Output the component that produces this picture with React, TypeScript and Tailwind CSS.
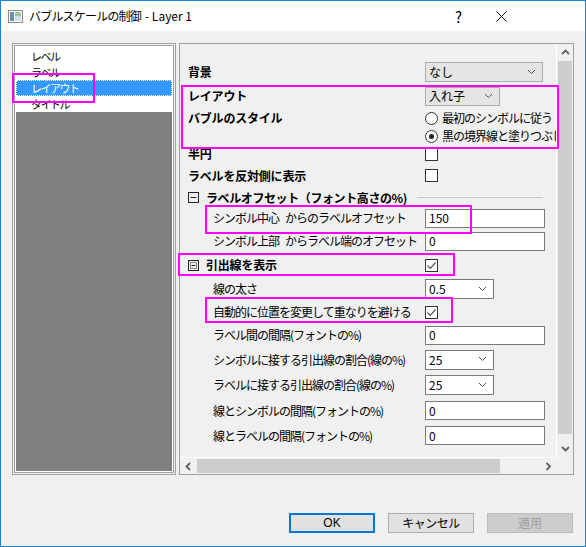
import React from 'react';
import clsx from 'clsx';

type Dir = 'up' | 'down' | 'left' | 'right';

const CHEVRONS: Record<Dir, string> = {
    down: 'M1 2l3.5 3.5L8 2',
    up: 'M1 6l3.5-3.5L8 6',
    left: 'M6 1L2.5 4.5 6 8',
    right: 'M2.5 1L6 4.5 2.5 8',
};

const Chevron: React.FC<{ dir?: Dir; bold?: boolean; className?: string }> = ({ dir = 'down', bold, className }) => (
    <svg width="9" height="9" viewBox="0 0 9 9" className={className}>
        <path d={CHEVRONS[dir]} fill="none" stroke={bold ? '#606060' : '#505050'} strokeWidth={bold ? 1.8 : 1} />
    </svg>
);

const Select: React.FC<{ value: string; editable?: boolean; className?: string }> = ({ value, editable, className }) => (
    <div
        className={clsx(
            'flex items-center justify-between border pl-[3px] pr-[6px]',
            editable ? 'bg-white border-[#7a7a7a]' : 'bg-[#e5e5e5] border-[#adadad]',
            className
        )}
    >
        <span className="leading-none">{value}</span>
        <Chevron />
    </div>
);

const Input: React.FC<{ value: string }> = ({ value }) => (
    <div className="flex items-center w-[120px] h-[19px] bg-white border border-[#7a7a7a] px-[3px]">
        <span className="leading-none">{value}</span>
    </div>
);

const Checkbox: React.FC<{ checked?: boolean }> = ({ checked }) => (
    <div className="w-[13px] h-[13px] border border-[#333] bg-white flex items-center justify-center">
        {checked && (
            <svg width="11" height="11" viewBox="0 0 11 11">
                <path d="M1.5 5.5l2.8 2.8L9.5 2.5" fill="none" stroke="#555" strokeWidth="1.2" />
            </svg>
        )}
    </div>
);

const Radio: React.FC<{ checked?: boolean }> = ({ checked }) => (
    <div className="w-[13px] h-[13px] rounded-full border border-[#333] bg-white flex items-center justify-center shrink-0">
        {checked && <div className="w-[5px] h-[5px] rounded-full bg-[#222]" />}
    </div>
);

const TreeBox: React.FC<{ open?: boolean }> = ({ open }) => (
    <svg width="11" height="11" viewBox="0 0 11 11" className="mr-[7px] shrink-0">
        <rect x="0.5" y="0.5" width="10" height="10" fill="none" stroke="#222" />
        {open ? (
            <path d="M2.5 5.5h6" stroke="#222" />
        ) : (
            <>
                <rect x="2.5" y="2.5" width="6" height="6" fill="none" stroke="#222" strokeDasharray="1 1" />
                <path d="M3.5 5.5h4" stroke="#222" />
            </>
        )}
    </svg>
);

interface RowProps {
    h: string;
    label?: React.ReactNode;
    bold?: boolean;
    indent?: boolean;
    children?: React.ReactNode;
}

const Row: React.FC<RowProps> = ({ h, label, bold, indent, children }) => (
    <div className={clsx('flex items-center shrink-0', h)}>
        <div
            className={clsx(
                'w-[237px] shrink-0 whitespace-nowrap',
                bold ? 'font-bold tracking-[-0.2px]' : 'tracking-[-1px]',
                indent && 'pl-[25px]'
            )}
        >
            {label}
        </div>
        {children}
    </div>
);

// label with the wide gap that the dialog shows between the two words
const Split: React.FC<{ a: string; b: string }> = ({ a, b }) => (
    <>
        {a}
        <span className="inline-block w-[6px]" />
        {b}
    </>
);

const LIST_ITEMS = ['レベル', 'ラベル', 'レイアウト', 'タイトル'];

const Highlight: React.FC<{ className: string }> = ({ className }) => (
    <div className={clsx('absolute border-2 border-[#ff00ff] pointer-events-none', className)} />
);

export default function App() {
    return (
        <div className="relative w-[586px] h-[547px] border border-[#1883d7] bg-[#f0f0f0] flex flex-col text-[12px] text-black font-['Noto_Sans_CJK_JP','Noto_Sans',sans-serif] overflow-hidden">
            {/* title bar */}
            <div className="h-[30px] bg-white flex items-center shrink-0">
                <svg width="15" height="13" viewBox="0 0 15 13" className="ml-[7px] mr-[6px]">
                    <rect x="0.5" y="0.5" width="14" height="12" fill="#fff" stroke="#8a8a8a" />
                    <rect x="2" y="2" width="4" height="9" fill="#6a8fb0" />
                    <rect x="7" y="2" width="6" height="4" fill="#9ec7a0" />
                    <rect x="7" y="6" width="6" height="5" fill="#cfdfe8" />
                </svg>
                <span className="tracking-[-0.8px]">バブルスケールの制御</span>
                <span className="ml-[4px]">- Layer 1</span>
                <span className="ml-auto text-[15px] leading-none mr-[34px]">?</span>
                <svg width="11" height="11" viewBox="0 0 11 11" className="mr-[78px]">
                    <path d="M0.5 0.5l10 10M10.5 0.5l-10 10" stroke="#111" strokeWidth="1" />
                </svg>
            </div>

            {/* body */}
            <div className="flex-1 flex flex-col pt-[12px] pl-[11px] pr-[11px] pb-[13px]">
                <div className="flex gap-[3px] h-[432px]">
                    {/* tree list */}
                    <div className="w-[164px] border border-[#a0a0a0] p-px">
                        <div className="h-full border border-[#a0a0a0] bg-white p-px flex flex-col">
                            <div className="flex flex-col pt-px text-[11px] tracking-[-1.5px]">
                                {LIST_ITEMS.map((item, i) => (
                                    <div
                                        key={item}
                                        className={clsx(
                                            'h-[16px] flex items-center pl-[15px]',
                                            i === 2 && 'bg-[#3399ff] text-white outline outline-1 outline-dotted outline-[#fff] -outline-offset-1'
                                        )}
                                    >
                                        {item}
                                    </div>
                                ))}
                            </div>
                            <div className="flex-1 bg-[#808080]" />
                        </div>
                    </div>

                    {/* property grid */}
                    <div className="w-[395px] border border-[#a0a0a0] flex flex-col">
                        <div className="flex-1 flex min-h-0">
                            <div className="w-[377px] overflow-hidden flex flex-col pl-[8px] border-r border-b border-white">
                                <div className="h-[16px] shrink-0" />
                                <Row h="h-[24px]" label="背景" bold>
                                    <Select value="なし" className="w-[118px] h-[20px]" />
                                </Row>
                                <Row h="h-[24px]" label="レイアウト" bold>
                                    <Select value="入れ子" className="w-[75px] h-[19px]" />
                                </Row>
                                <div className="flex shrink-0 h-[37px] pt-px">
                                    <div className="w-[237px] shrink-0 h-[18px] flex items-center font-bold tracking-[-0.2px]">
                                        バブルのスタイル
                                    </div>
                                    <div className="flex flex-col whitespace-nowrap tracking-[-1px]">
                                        <div className="h-[18px] flex items-center gap-[4px]">
                                            <Radio />
                                            <span>最初のシンボルに従う</span>
                                        </div>
                                        <div className="h-[18px] flex items-center gap-[4px]">
                                            <Radio checked />
                                            <span>黒の境界線と塗りつぶし</span>
                                        </div>
                                    </div>
                                </div>
                                <Row h="h-[18px]" label="半円" bold>
                                    <Checkbox />
                                </Row>
                                <Row h="h-[25px]" label="ラベルを反対側に表示" bold>
                                    <Checkbox />
                                </Row>
                                <div className="h-[19px] shrink-0 flex items-center pr-[13px]">
                                    <TreeBox open />
                                    <span className="font-bold tracking-[-0.4px] whitespace-nowrap">ラベルオフセット（フォント高さの%)</span>
                                    <div className="flex-1 h-px bg-[#c8c8c8] ml-[10px]" />
                                </div>
                                <Row h="h-[22px]" label={<Split a="シンボル中心" b="からのラベルオフセット" />} indent>
                                    <Input value="150" />
                                </Row>
                                <Row h="h-[24px]" label={<Split a="シンボル上部" b="からラベル端のオフセット" />} indent>
                                    <Input value="0" />
                                </Row>
                                <Row
                                    h="h-[24px]"
                                    label={
                                        <span className="flex items-center">
                                            <TreeBox />
                                            引出線を表示
                                        </span>
                                    }
                                    bold
                                >
                                    <Checkbox checked />
                                </Row>
                                <Row h="h-[24px]" label="線の太さ" indent>
                                    <Select value="0.5" editable className="w-[69px] h-[20px]" />
                                </Row>
                                <Row h="h-[22px]" label="自動的に位置を変更して重なりを避ける" indent>
                                    <Checkbox checked />
                                </Row>
                                <Row h="h-[24px]" label="ラベル間の間隔(フォントの%)" indent>
                                    <Input value="0" />
                                </Row>
                                <Row h="h-[25px]" label="シンボルに接する引出線の割合(線の%)" indent>
                                    <Select value="25" editable className="w-[69px] h-[20px]" />
                                </Row>
                                <Row h="h-[26px]" label="ラベルに接する引出線の割合(線の%)" indent>
                                    <Select value="25" editable className="w-[69px] h-[20px]" />
                                </Row>
                                <Row h="h-[25px]" label="線とシンボルの間隔(フォントの%)" indent>
                                    <Input value="0" />
                                </Row>
                                <Row h="h-[25px]" label="線とラベルの間隔(フォントの%)" indent>
                                    <Input value="0" />
                                </Row>
                            </div>
                            {/* vertical scrollbar */}
                            <div className="w-[16px] flex flex-col bg-[#f0f0f0]">
                                <div className="h-[17px] flex items-center justify-center">
                                    <Chevron dir="up" bold />
                                </div>
                                <div className="h-[373px] bg-[#cdcdcd] mx-px" />
                                <div className="flex-1" />
                                <div className="h-[17px] flex items-center justify-center">
                                    <Chevron dir="down" bold />
                                </div>
                            </div>
                        </div>
                        {/* horizontal scrollbar */}
                        <div className="h-[16px] flex shrink-0">
                            <div className="w-[377px] flex">
                                <div className="w-[17px] flex items-center justify-center">
                                    <Chevron dir="left" bold />
                                </div>
                                <div className="w-[303px] bg-[#cdcdcd] my-px" />
                                <div className="flex-1" />
                                <div className="w-[17px] flex items-center justify-center">
                                    <Chevron dir="right" bold />
                                </div>
                            </div>
                            <div className="flex-1" />
                        </div>
                    </div>
                </div>

                {/* buttons */}
                <div className="mt-auto flex justify-end gap-[13px] pr-px">
                    <button className="w-[86px] h-[20px] border-2 border-[#0078d7] bg-[#e1e1e1] flex items-center justify-center leading-none font-['Liberation_Sans',sans-serif]">
                        OK
                    </button>
                    <button className="w-[86px] h-[20px] border border-[#adadad] bg-[#e1e1e1] flex items-center justify-center leading-none tracking-[-0.5px]">
                        キャンセル
                    </button>
                    <button disabled className="w-[86px] h-[20px] border border-[#bfbfbf] bg-[#cccccc] text-[#a0a0a0] flex items-center justify-center leading-none">
                        適用
                    </button>
                </div>
            </div>

            {/* annotation boxes */}
            <Highlight className="left-[11px] top-[72px] w-[83px] h-[30px]" />
            <Highlight className="left-[180px] top-[84px] w-[378px] h-[64px]" />
            <Highlight className="left-[204px] top-[204px] w-[267px] h-[29px]" />
            <Highlight className="left-[177px] top-[252px] w-[277px] h-[23px]" />
            <Highlight className="left-[204px] top-[296px] w-[248px] h-[26px]" />
        </div>
    );
}
